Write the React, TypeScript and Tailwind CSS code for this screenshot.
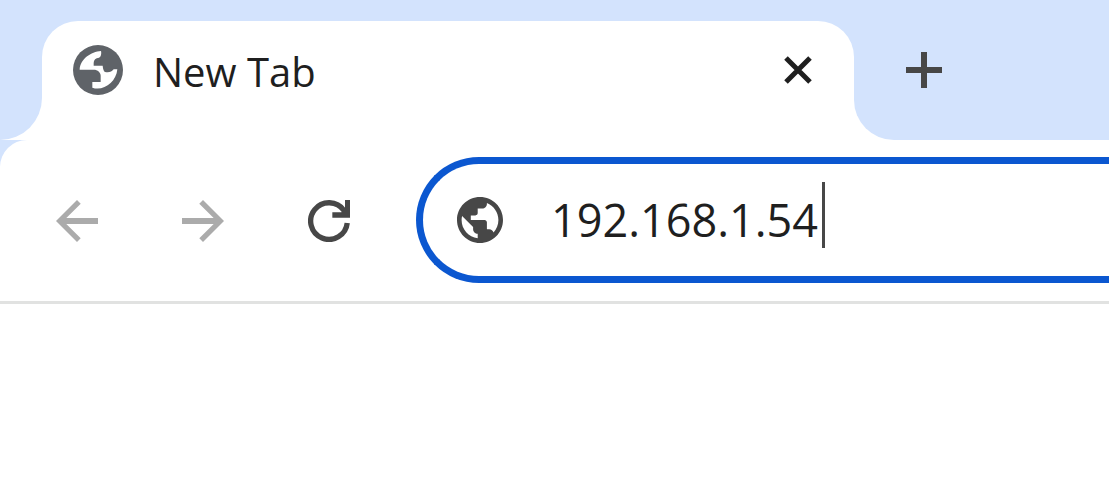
import React, { useState } from "react";

const TabGlobeIcon: React.FC = () => (
  <svg viewBox="0 0 150 150" className="size-[50px] shrink-0" aria-hidden="true">
    <circle cx="75" cy="75" r="75" fill="#5f6368" />
    <path
      fill="#fff"
      d="M84 18C54 20 22 42 20 74H62C74 74 83 82 83 92V111H58V128C90 140 130 112 133 73H122C116 81 108 83 96 81C92 78 90 72 89 62H62V54C62 44 68 39 78 38C84 36 86 26 84 18z"
    />
  </svg>
);

const SiteGlobeIcon: React.FC = () => (
  <svg viewBox="2 2 20 20" className="size-[46px] shrink-0" fill="#474747" aria-hidden="true">
    <path d="M12 2C6.48 2 2 6.48 2 12s4.48 10 10 10 10-4.48 10-10S17.52 2 12 2zm-1 17.93c-3.95-.49-7-3.85-7-7.93 0-.62.08-1.21.21-1.79L9 15v1c0 1.1.9 2 2 2v1.93zm6.9-2.54c-.26-.81-1-1.39-1.9-1.39h-1v-3c0-.55-.45-1-1-1H8v-2h2c.55 0 1-.45 1-1V7h2c1.1 0 2-.9 2-2v-.41c2.93 1.19 5 4.06 5 7.41 0 2.08-.8 3.97-2.1 5.39z" />
  </svg>
);

const BackIcon: React.FC = () => (
  <svg viewBox="4 4 16 16" className="size-[42px]" fill="#ababab" aria-hidden="true">
    <path d="M20 10.9H7.93l5.49-5.49L12 4l-8 8 8 8 1.41-1.41L7.93 13.1H20z" />
  </svg>
);

const ForwardIcon: React.FC = () => (
  <svg viewBox="4 4 16 16" className="size-[42px]" fill="#ababab" aria-hidden="true">
    <path d="M4 10.9h12.07l-5.49-5.49L12 4l8 8-8 8-1.41-1.41 5.48-5.49H4z" />
  </svg>
);

const ReloadIcon: React.FC = () => (
  <svg viewBox="0 0 126 126" className="size-[42px]" aria-hidden="true">
    <path
      d="M117.7 69A55 55 0 1 1 108 31.5L116 44"
      fill="none"
      stroke="#474747"
      strokeWidth="16"
    />
    <path d="M111 0H126V53H73V37H100L111 25z" fill="#474747" />
  </svg>
);

const App: React.FC = () => {
  const [url, setUrl] = useState("192.168.1.54");

  return (
    <div className="min-h-screen overflow-hidden bg-white font-['Open_Sans','Noto_Sans',sans-serif] text-[#1f1f1f]">
      <div className="bg-[#d3e3fd]">
        <header className="flex items-end pt-[21px]">
          <div className="size-[42px] shrink-0 bg-white">
            <div className="size-full rounded-br-full bg-[#d3e3fd]" />
          </div>
          <div className="w-[812px] rounded-t-[36px] bg-white pr-[42px] pb-[21px] pl-[31px]">
            <div className="flex h-[98px] items-center">
              <TabGlobeIcon />
              <span className="ml-[30px] flex-1 truncate pt-1 text-[40px]">New Tab</span>
              <button type="button" aria-label="Close tab">
                <svg viewBox="0 0 84 84" className="size-7" aria-hidden="true">
                  <path d="M6 6L78 78M78 6L6 78" stroke="#1f1f1f" strokeWidth="15" />
                </svg>
              </button>
            </div>
          </div>
          <div className="size-10 shrink-0 bg-white">
            <div className="size-full rounded-bl-full bg-[#d3e3fd]" />
          </div>
          <button
            type="button"
            aria-label="New tab"
            className="ml-3 flex h-[98px] items-center self-start"
          >
            <svg viewBox="0 0 36 36" className="size-9" aria-hidden="true">
              <path d="M18 0V36M0 18H36" stroke="#474747" strokeWidth="6" />
            </svg>
          </button>
        </header>

        <nav className="flex items-center rounded-tl-[27px] border-b-3 border-[#e1e2e1] bg-white pt-[17px] pb-[18px] pl-[14px]">
          <button type="button" aria-label="Back" disabled className="flex w-[126px] shrink-0 justify-center pt-0.5">
            <BackIcon />
          </button>
          <button type="button" aria-label="Forward" disabled className="flex w-[126px] shrink-0 justify-center pt-0.5">
            <ForwardIcon />
          </button>
          <button type="button" aria-label="Reload" className="flex w-[126px] shrink-0 justify-center pt-0.5">
            <ReloadIcon />
          </button>
          <div className="ml-6 flex h-[126px] min-w-0 flex-1 items-center rounded-l-full border-7 border-r-0 border-[#0b57d0] pl-[34px]">
            <SiteGlobeIcon />
            <input
              type="text"
              aria-label="Address"
              value={url}
              onChange={(e) => setUrl(e.target.value)}
              className="ml-12 field-sizing-content bg-transparent text-[45px] leading-[66px] caret-transparent outline-none"
            />
            <span className="mb-[10px] ml-1 h-[66px] w-[3px] shrink-0 bg-[#474747]" />
          </div>
        </nav>
      </div>
      <main />
    </div>
  );
};

export default App;
